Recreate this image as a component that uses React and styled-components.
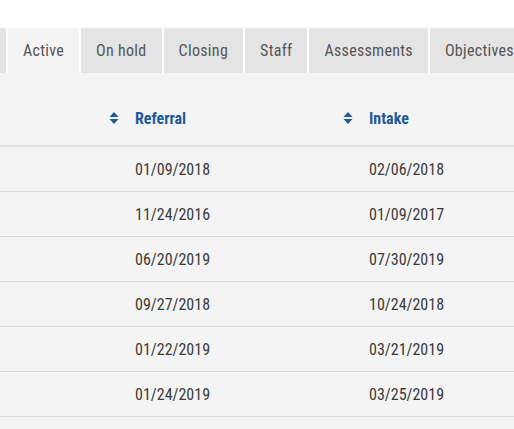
import React from 'react';
import styled, {createGlobalStyle} from 'styled-components';

//<<-- styling -->>
const GlobalStyle = createGlobalStyle`
    html, body {
        margin: 0;
        padding: 0;
        background: #ffffff;
        font-family: Roboto, "Liberation Sans", sans-serif;
        font-stretch: 75%;
    }
`
const Page = styled.div`
    width: 514px;
    height: 429px;
    overflow: hidden;
    padding-top: 28px;
    box-sizing: border-box;
    background: #ffffff;
`
const TabStrip = styled.div`
    display: flex;
    gap: 2px;
    margin-left: -70px;
    white-space: nowrap;
`
const Tab = styled.div`
    flex: none;
    height: 45px;
    display: flex;
    align-items: center;
    justify-content: center;
    padding: 0 15px;
    box-sizing: border-box;
    font-size: 16px;
    letter-spacing: 0.3px;
    color: #555555;
    background: ${props => props.active ? '#f4f4f4' : '#e4e4e4'};
    width: ${props => props.w ? props.w + 'px' : 'auto'};
`
const Panel = styled.div`
    background: #f4f4f4;
    height: 100%;
`
const Grid = styled.div`
    display: grid;
    grid-template-columns: 109px 234px 1fr;
`
const HeadCell = styled.div`
    height: 74px;
    padding-top: 18px;
    display: flex;
    align-items: center;
    border-bottom: 2px solid #dddddd;
    box-sizing: border-box;
    font-size: 16px;
    font-weight: 700;
    color: #1f5a9c;
`
const SortIcon = styled.svg`
    flex: none;
    width: 10px;
    height: 12px;
    margin: 0 16px 0 0;
`
const Cell = styled.div`
    height: 45px;
    display: flex;
    align-items: center;
    padding-left: 26px;
    border-bottom: 1px solid #dddddd;
    box-sizing: border-box;
    font-size: 16px;
    color: #3a3a3a;
`
const Blank = styled(Cell)`
    padding-left: 0;
`

const tabs = [
    {label: '', w: 76},
    {label: 'Active', active: true},
    {label: 'On hold'},
    {label: 'Closing'},
    {label: 'Staff'},
    {label: 'Assessments'},
    {label: 'Objectives'},
]

const rows = [
    ['01/09/2018', '02/06/2018'],
    ['11/24/2016', '01/09/2017'],
    ['06/20/2019', '07/30/2019'],
    ['09/27/2018', '10/24/2018'],
    ['01/22/2019', '03/21/2019'],
    ['01/24/2019', '03/25/2019'],
]

const Sort = () => (
    <SortIcon viewBox="0 0 10 12">
        <path d="M5 0 L9.5 5 L0.5 5 Z" fill="#1f5a9c"/>
        <path d="M0.5 7 L9.5 7 L5 12 Z" fill="#1f5a9c"/>
    </SortIcon>
)

//<<<--- code --->>>
const App = () => {
    return (
        <Page>
            <GlobalStyle/>
            <TabStrip>
                {tabs.map((t, i) => (
                    <Tab key={i} active={t.active} w={t.w}>{t.label}</Tab>
                ))}
            </TabStrip>
            <Panel>
                <Grid>
                    <HeadCell/>
                    <HeadCell><Sort/>Referral</HeadCell>
                    <HeadCell><Sort/>Intake</HeadCell>
                    {rows.map((r, i) => (
                        <React.Fragment key={i}>
                            <Blank/>
                            <Cell>{r[0]}</Cell>
                            <Cell>{r[1]}</Cell>
                        </React.Fragment>
                    ))}
                </Grid>
            </Panel>
        </Page>
    )
}
export default App;
